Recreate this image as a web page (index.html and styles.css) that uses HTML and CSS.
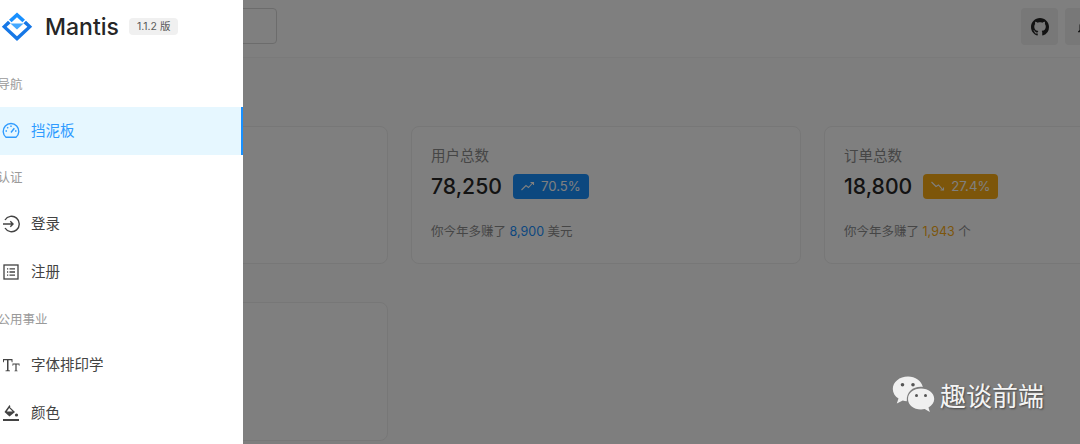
FILE: index.html
```html
<!DOCTYPE html>
<html lang="zh-CN">
<head>
    <meta charset="UTF-8">
    <title>Mantis</title>
    <link rel="stylesheet" href="styles.css">
</head>
<body>
    <div class="page">
        <header class="topbar">
            <div class="search"></div>
            <div class="actions">
                <div class="action-btn">
                    <svg width="18" height="18" viewBox="0 0 16 16"><path fill="#262626" d="M8 0C3.58 0 0 3.58 0 8c0 3.54 2.29 6.53 5.47 7.59.4.07.55-.17.55-.38 0-.19-.01-.82-.01-1.49-2.01.37-2.53-.49-2.69-.94-.09-.23-.48-.94-.82-1.13-.28-.15-.68-.52-.01-.53.63-.01 1.08.58 1.23.82.72 1.21 1.87.87 2.33.66.07-.52.28-.87.51-1.07-1.78-.2-3.64-.89-3.64-3.95 0-.87.31-1.59.82-2.15-.08-.2-.36-1.02.08-2.12 0 0 .67-.21 2.2.82.64-.18 1.32-.27 2-.27s1.36.09 2 .27c1.53-1.04 2.2-.82 2.2-.82.44 1.1.16 1.92.08 2.12.51.56.82 1.27.82 2.15 0 3.07-1.87 3.75-3.65 3.95.29.25.54.73.54 1.48 0 1.07-.01 1.93-.01 2.2 0 .21.15.46.55.38A8.01 8.01 0 0 0 16 8c0-4.42-3.58-8-8-8z"/></svg>
                </div>
                <div class="action-btn">
                    <svg width="18" height="18" viewBox="0 0 24 24"><path fill="#262626" d="M12 2a2 2 0 0 0-2 2v1a6 6 0 0 0-4 6v5l-2 2v1h16v-1l-2-2v-5a6 6 0 0 0-4-6V4a2 2 0 0 0-2-2z"/></svg>
                </div>
            </div>
        </header>

        <main class="content">
            <div class="cards">
                <div class="card"></div>
                <div class="card">
                    <div class="card-title">用户总数</div>
                    <div class="card-stat">
                        <span class="stat-value">78,250</span>
                        <span class="stat-tag tag-blue">
                            <svg width="16" height="16" viewBox="0 0 16 16"><path d="M1.5 12 L6 7.5 L8.5 9.5 L13 4.5 M10.5 4.5 H13.5 V7" fill="none" stroke="currentColor" stroke-width="1.1"/></svg>
                            70.5%
                        </span>
                    </div>
                    <div class="card-note">你今年多赚了 <span class="note-blue">8,900</span> 美元</div>
                </div>
                <div class="card">
                    <div class="card-title">订单总数</div>
                    <div class="card-stat">
                        <span class="stat-value">18,800</span>
                        <span class="stat-tag tag-gold">
                            <svg width="16" height="16" viewBox="0 0 16 16"><path d="M1.5 4 L6 8.5 L8.5 7 L13 12 M10.5 12 H13.5 V9.5" fill="none" stroke="currentColor" stroke-width="1.1"/></svg>
                            27.4%
                        </span>
                    </div>
                    <div class="card-note">你今年多赚了 <span class="note-gold">1,943</span> 个</div>
                </div>
            </div>
            <div class="cards">
                <div class="card card-low"></div>
            </div>
        </main>

        <div class="backdrop"></div>

        <aside class="drawer">
            <div class="brand">
                <svg class="brand-logo" width="32" height="30" viewBox="0 0 32 30">
                    <path fill="#1890ff" d="M16 0.5 L24 7.8 L21.4 10.2 L16 5.3 L10.6 10.2 L8 7.8 Z"/>
                    <path fill="#45a9ff" d="M9.4 11.5 H22.6 L16 17.5 Z"/>
                    <path fill="#1677e6" d="M7 8.7 L9.6 11.2 L5.6 14.8 L16 24.2 L26.4 14.8 L22.4 11.2 L25 8.7 L31.2 14.8 L16 29 L0.8 14.8 Z"/>
                </svg>
                <span class="brand-name">Mantis</span>
                <span class="brand-ver">1.1.2 版</span>
            </div>

            <div class="nav-group">导航</div>
            <a class="nav-item active">
                <svg width="18" height="18" viewBox="0 0 18 18" fill="none" stroke="currentColor" stroke-width="1.4"><path d="M4 15.3 A7.8 7.8 0 1 1 14 15.3 Z"/><path d="M9 10.5 L12.3 6.2"/><path d="M3.5 9 H5 M13 9 H14.5 M9 3.5 V5 M5.2 5.2 L6.2 6.2"/></svg>
                <span>挡泥板</span>
            </a>

            <div class="nav-group group-auth">认证</div>
            <a class="nav-item">
                <svg width="18" height="18" viewBox="0 0 18 18" fill="none" stroke="currentColor" stroke-width="1.4"><path d="M3 5 A7.7 7.7 0 1 1 3 13"/><path d="M1 9 H11 M8.3 6.3 L11 9 L8.3 11.7"/></svg>
                <span>登录</span>
            </a>
            <a class="nav-item">
                <svg width="16" height="16" viewBox="0 0 16 16" fill="none" stroke="currentColor" stroke-width="1.3"><rect x="1" y="1" width="14" height="14"/><path d="M6.5 4.8 H12 M6.5 8 H12 M6.5 11.2 H12 M4 4.8 H5.2 M4 8 H5.2 M4 11.2 H5.2"/></svg>
                <span>注册</span>
            </a>

            <div class="nav-group group-util">公用事业</div>
            <a class="nav-item">
                <svg width="18" height="18" viewBox="0 0 18 18" fill="currentColor"><path d="M1 3 H10.5 V6.2 H9.7 L9.4 4.2 H6.5 V14.2 L8 14.6 V15.3 H3.5 V14.6 L5 14.2 V4.2 H2.1 L1.8 6.2 H1 Z"/><path d="M10.5 7.5 H17.5 V9.8 H16.9 L16.6 8.5 H14.6 V14.4 L15.6 14.7 V15.3 H12.4 V14.7 L13.4 14.4 V8.5 H11.4 L11.1 9.8 H10.5 Z"/></svg>
                <span>字体排印学</span>
            </a>
            <a class="nav-item">
                <svg width="18" height="18" viewBox="0 0 18 18" fill="currentColor"><path d="M7.5 1 L8.5 2.2 L7.8 3 L13 8 L7.5 12.5 L2.5 8 Z M7.2 4 L4.8 7.6 H10.6 Z"/><circle cx="14.5" cy="11" r="1.6"/><rect x="1" y="15" width="16" height="2"/></svg>
                <span>颜色</span>
            </a>
        </aside>

        <div class="watermark">
            <svg width="43" height="37" viewBox="0 0 43 37">
                <path fill="#f0f0f0" d="M16 0.5 C7.5 0.5 0.8 6 0.8 13 C0.8 17 3 20.3 6.5 22.6 L4.8 27.5 L10.8 24.6 C12 25 13.4 25.2 14.8 25.3 C14.2 15 22 10 30.8 11 C29.5 5 23.4 0.5 16 0.5 Z"/>
                <path fill="#f0f0f0" d="M29 12.5 C21.6 12.5 16 17 16 23 C16 29 21.6 33.5 29 33.5 C30.3 33.5 31.5 33.3 32.7 33 L37.8 36 L36.5 31.5 C40 29.3 42.2 26.3 42.2 23 C42.2 17 36.4 12.5 29 12.5 Z"/>
                <g fill="#555"><circle cx="10.5" cy="8.8" r="1.8"/><circle cx="21" cy="8.8" r="1.8"/><circle cx="24.5" cy="19.5" r="1.5"/><circle cx="33.5" cy="19.5" r="1.5"/></g>
            </svg>
            <span>趣谈前端</span>
        </div>
    </div>
</body>
</html>
```

FILE: styles.css
```css
* {
    box-sizing: border-box;
}

body {
    margin: 0;
    font-family: "Inter", "Noto Sans CJK SC", sans-serif;
}

.page {
    position: relative;
    width: 1080px;
    height: 444px;
    overflow: hidden;
    background: #fcfcfc;
}

.topbar {
    display: flex;
    justify-content: space-between;
    height: 58px;
    padding: 8px 0 0 0;
    border-bottom: 1px solid #f4f4f4;
    background: #fff;
}

.search {
    width: 277px;
    height: 36px;
    border: 1px solid #d9d9d9;
    border-radius: 4px;
}

.actions {
    display: flex;
    gap: 7px;
    margin-right: -22px;
}

.action-btn {
    width: 37px;
    height: 37px;
    border-radius: 4px;
    background: #f0f0f0;
    display: flex;
    align-items: center;
    justify-content: center;
}

.content {
    padding-top: 68px;
    display: flex;
    flex-direction: column;
    gap: 38px;
}

.cards {
    display: flex;
    gap: 23px;
    margin-left: -2px;
}

.card {
    flex: none;
    width: 390px;
    height: 138px;
    padding: 18px 19px;
    background: #fff;
    border: 1px solid #eeeeee;
    border-radius: 8px;
}

.card-low {
    height: 139px;
}

.card-title {
    font-size: 14.5px;
    line-height: 22px;
    color: #8c8c8c;
}

.card-stat {
    display: flex;
    align-items: center;
    gap: 11px;
    margin-top: 6px;
}

.stat-value {
    font-size: 21.2px;
    font-weight: 500;
    line-height: 26px;
    color: #262626;
}

.stat-tag {
    display: flex;
    align-items: center;
    gap: 5px;
    height: 25px;
    padding: 0 8px 0 7px;
    border-radius: 4px;
    font-size: 13.2px;
    color: #fff;
}

.tag-blue {
    background: #1890ff;
}

.tag-gold {
    background: #faad14;
}

.card-note {
    margin-top: 23px;
    font-size: 12.5px;
    line-height: 20px;
    color: #8c8c8c;
}

.note-blue {
    color: #1890ff;
}

.note-gold {
    color: #faad14;
}

.backdrop {
    position: absolute;
    inset: 0;
    background: rgba(0, 0, 0, 0.5);
}

.drawer {
    position: absolute;
    top: 0;
    left: 0;
    bottom: 0;
    width: 243px;
    background: #fff;
    overflow: hidden;
}

.brand {
    display: flex;
    align-items: center;
    height: 53px;
}

.brand-logo {
    flex: none;
    margin-left: 1px;
    margin-right: 12px;
}

.brand-name {
    font-size: 23px;
    font-weight: 500;
    color: #262626;
}

.brand-ver {
    margin-left: 10px;
    padding: 0 8px;
    height: 17px;
    line-height: 17px;
    font-size: 10.5px;
    border-radius: 4px;
    background: #f0f0f0;
    color: #595959;
}

.nav-group {
    height: 54px;
    margin-left: -2.5px;
    padding-top: 22px;
    font-size: 12.5px;
    line-height: 20px;
    color: #9a9a9a;
}

.group-auth {
    height: 45px;
    padding-top: 13px;
}

.group-util {
    height: 45px;
    padding-top: 14px;
}

.nav-item {
    display: flex;
    align-items: center;
    gap: 11px;
    height: 48px;
    padding-left: 2px;
    padding-bottom: 1px;
    font-size: 14.5px;
    color: #434343;
}

.nav-item span {
    padding-bottom: 2px;
}

.nav-item svg {
    flex: none;
    width: 18px;
}

.nav-item.active {
    background: #e6f7ff;
    border-right: 2px solid #1890ff;
    color: #2f9bff;
}

.watermark {
    position: absolute;
    left: 892px;
    top: 376px;
    display: flex;
    align-items: center;
    gap: 5px;
    font-size: 26px;
    color: #f4f4f4;
    text-shadow: 1px 1px 2px rgba(0, 0, 0, 0.45);
}
```
